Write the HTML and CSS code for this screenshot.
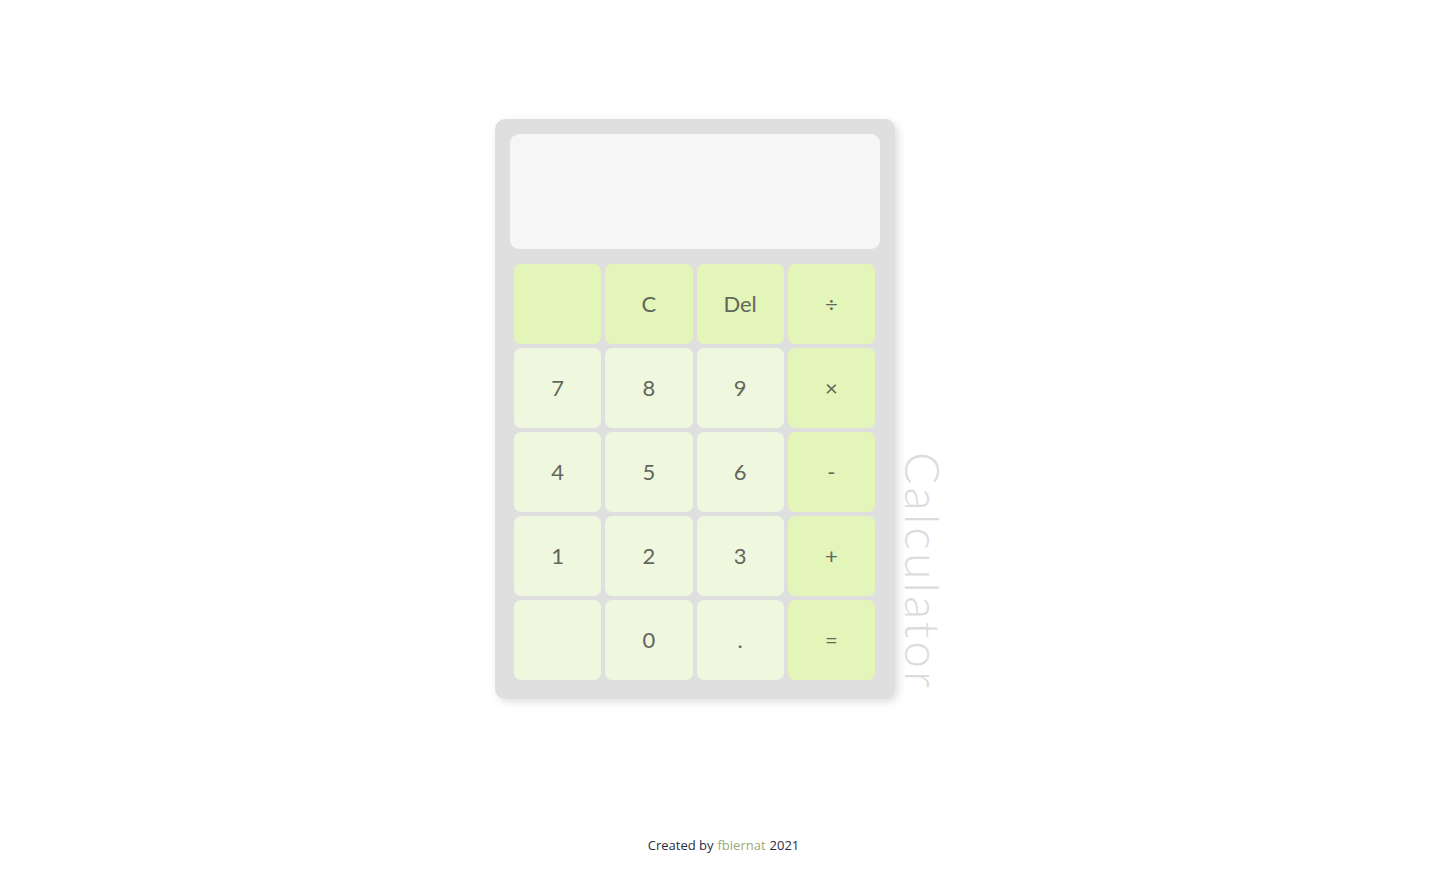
FILE: index.html
```html
<!DOCTYPE html>
<html lang="en">
<head>
<meta charset="utf-8">
<title>Calculator</title>
<link rel="stylesheet" href="styles.css">
</head>
<body>
<main class="page">
  <div class="wrap">
    <div class="calculator">
      <div class="display"></div>
      <div class="keys">
        <button class="key op"></button>
        <button class="key op">C</button>
        <button class="key op">Del</button>
        <button class="key op">÷</button>
        <button class="key">7</button>
        <button class="key">8</button>
        <button class="key">9</button>
        <button class="key op">×</button>
        <button class="key">4</button>
        <button class="key">5</button>
        <button class="key">6</button>
        <button class="key op">-</button>
        <button class="key">1</button>
        <button class="key">2</button>
        <button class="key">3</button>
        <button class="key op">+</button>
        <button class="key"></button>
        <button class="key">0</button>
        <button class="key">.</button>
        <button class="key op">=</button>
      </div>
    </div>
    <div class="title">Calculator</div>
  </div>
</main>
<footer class="footer">Created by <span class="author">fbiernat</span> 2021</footer>
</body>
</html>
```

FILE: styles.css
```css
html, body {
  margin: 0;
  padding: 0;
  background: #ffffff;
}
body {
  height: 871px;
  display: flex;
  flex-direction: column;
  font-family: Lato, "Open Sans", sans-serif;
}
.page {
  height: 818px;
  display: flex;
  align-items: center;
  justify-content: center;
}
.wrap {
  display: flex;
  align-items: flex-end;
}
.calculator {
  width: 400px;
  height: 580px;
  box-sizing: border-box;
  padding: 15px 15px 19px 15px;
  background: #dfdfdf;
  border-radius: 10px;
  box-shadow: 3px 3px 8px rgba(0, 0, 0, 0.13);
  display: flex;
  flex-direction: column;
}
.display {
  height: 115px;
  background: #f6f6f6;
  border-radius: 9px;
}
.keys {
  margin: 15px 5px 0 4px;
  display: grid;
  grid-template-columns: repeat(4, 1fr);
  grid-auto-rows: 80px;
  gap: 4px;
}
.key {
  border: none;
  border-radius: 7px;
  background: #eff7df;
  color: #63665b;
  font-family: Lato, "Open Sans", sans-serif;
  font-size: 22px;
  padding: 0 0 2px 0;
  cursor: pointer;
}
.key.op {
  background: #e3f5b8;
}
.title {
  writing-mode: vertical-rl;
  font-family: Lato, sans-serif;
  font-weight: 300;
  font-size: 48px;
  line-height: 57px;
  letter-spacing: 3px;
  color: #dcdcdc;
  padding-bottom: 8px;
}
.footer {
  height: 53px;
  display: flex;
  align-items: center;
  justify-content: center;
  font-family: "Open Sans", sans-serif;
  font-size: 13px;
  color: #2b2d42;
}
.author {
  color: #9aab7a;
  margin: 0 4px;
}
```
